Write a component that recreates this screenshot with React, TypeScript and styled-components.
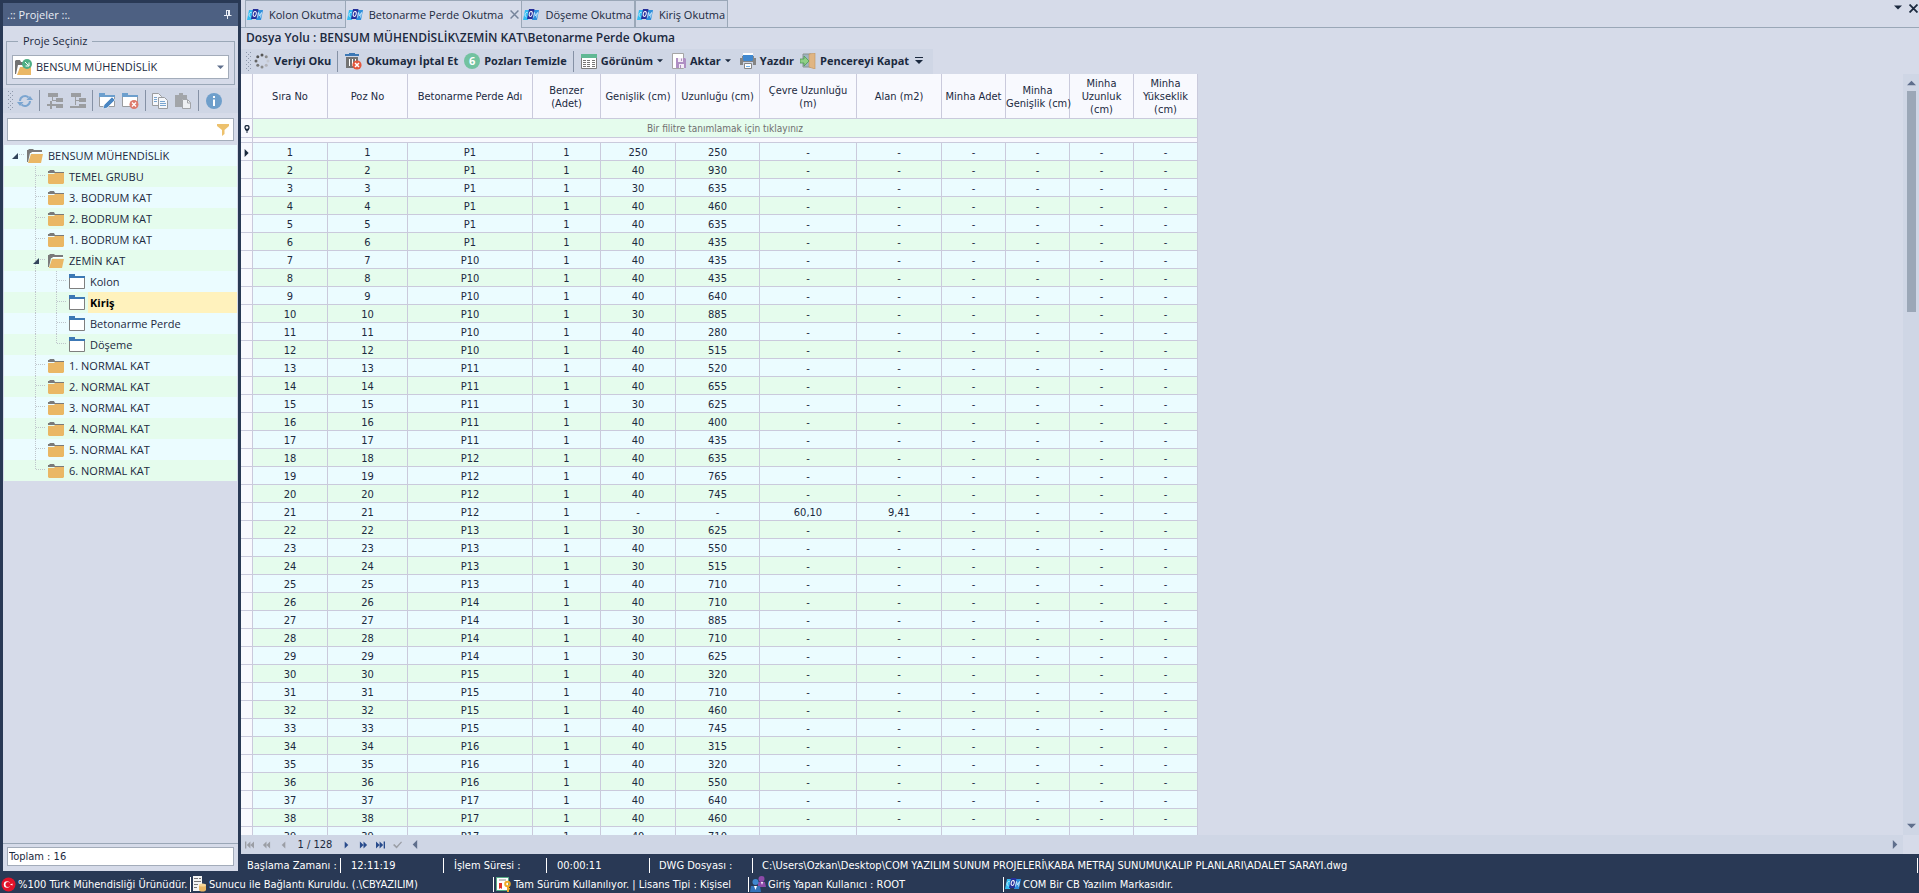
import React from 'react';
import styled, { createGlobalStyle, css } from 'styled-components';

const UI_FONT = '"Open Sans", "Noto Sans", sans-serif';
const GRID_FONT = '"DejaVu Sans Condensed", "Noto Sans", sans-serif';

const c = {
  dark: '#293955',
  title: '#4d6082',
  panel: '#d6dbe9',
  bar: '#cfd6e5',
  line: '#9aa7b7',
  grid: '#cacadc',
  head: '#f8f9fe',
  cyan: '#ebfcff',
  green: '#e5fced',
  text: '#1b293e',
};

const GlobalStyle = createGlobalStyle`
  * { box-sizing: border-box; }
  body { margin: 0; background: ${c.dark}; color: ${c.text}; font: 11px/16px ${UI_FONT}; }
  button, select, input { font: inherit; color: inherit; border: 0; padding: 0; margin: 0; background: none; outline: 0; }
  svg { display: block; flex: none; }
`;

const Page = styled.div`
  height: 100vh;
  display: flex;
  flex-direction: column;
  overflow: hidden;
`;
const Main = styled.div`
  flex: 1;
  min-height: 0;
  display: flex;
`;

/* ---------- left panel ---------- */
const Sidebar = styled.aside`
  width: 241px;
  flex: none;
  padding: 3px 3px 0;
  display: flex;
`;
const Panel = styled.div`
  flex: 1;
  min-width: 0;
  margin-bottom: -17px;
  background: ${c.panel};
  display: flex;
  flex-direction: column;
`;
const PanelTitle = styled.div`
  height: 23px;
  padding: 0 6px 0 4px;
  background: ${c.title};
  color: #e9edf5;
  display: flex;
  align-items: center;
  justify-content: space-between;
`;
const Group = styled.fieldset`
  margin: 7px 3px 3px;
  padding: 6px 5px 5px;
  border: 1px solid ${c.line};
  min-width: 0;
`;
const GroupLegend = styled.legend`
  margin-left: 6px;
  padding: 0 5px;
`;
const Combo = styled.div`
  height: 24px;
  display: flex;
  align-items: center;
  gap: 4px;
  padding: 0 4px 0 2px;
  background: #fff;
  border: 1px solid #a3acba;
`;
const ComboSelect = styled.select`
  appearance: none;
  flex: 1;
  min-width: 0;
`;
const IconBar = styled.div`
  height: 25px;
  padding-left: 4px;
  background: ${c.bar};
  display: flex;
  align-items: center;
`;
const IconButton = styled.button`
  width: 23px;
  height: 23px;
  display: grid;
  place-items: center;
`;
const BarSeparator = styled.span<{ $wide?: boolean }>`
  width: 1px;
  height: 21px;
  margin: 0 ${p => (p.$wide ? 4 : 3)}px 0 3px;
  background: #8591a5;
`;
const SearchBox = styled.div`
  height: 23px;
  margin: 5px 4px 4px;
  padding: 0 4px;
  border: 1px solid #a3acba;
  background: #fff;
  display: flex;
  align-items: center;
`;
const SearchInput = styled.input`
  flex: 1;
  min-width: 0;
`;
const Tree = styled.ul`
  list-style: none;
  margin: 0 1px;
  padding: 0;
  flex: 1;
`;
const TreeRow = styled.li<{ $alt: boolean }>`
  height: 21px;
  padding-left: 2px;
  display: flex;
  align-items: center;
  background: ${p => (p.$alt ? c.green : c.cyan)};
`;
const TreeLabel = styled.span<{ $selected?: boolean }>`
  flex: 1;
  height: 21px;
  margin-left: 3px;
  padding-left: 2px;
  line-height: 21px;
  ${p => p.$selected && css`background: #fff2bd; color: #000; font-weight: 700;`}
`;
const TotalBar = styled.div`
  border-top: 1px solid ${c.line};
  padding: 3px 4px 5px;
`;
const TotalInput = styled.input`
  width: 100%;
  height: 19px;
  padding: 0 1px;
  background: #fff;
  border: 1px solid #a3acba;
  display: block;
  font-family: ${GRID_FONT};
`;

/* ---------- work area ---------- */
const Work = styled.main`
  flex: 1;
  min-width: 0;
  background: ${c.panel};
  display: flex;
  flex-direction: column;
`;
const TabStrip = styled.div`
  height: 28px;
  display: flex;
`;
const TabEdge = styled.div<{ $grow?: boolean }>`
  width: 4px;
  ${p => p.$grow && css`flex: 1;`}
  border-bottom: 1px solid ${c.line};
  display: flex;
  justify-content: flex-end;
  align-items: flex-start;
  gap: 7px;
  padding: ${p => (p.$grow ? '4px 1px 0 0' : '0')};
`;
const Tab = styled.button<{ $active?: boolean }>`
  border: 1px solid ${c.line};
  border-left-width: ${p => (p.$active ? 0 : 1)}px;
  border-right-width: ${p => (p.$active ? 0 : 1)}px;
  border-bottom-color: ${p => (p.$active ? 'transparent' : c.line)};
  background: ${p => (p.$active ? c.panel : c.bar)};
  padding: 1px 2px 0 1px;
  display: flex;
  align-items: center;
  gap: 6px;
  white-space: nowrap;
`;
const TabClose = styled.span`
  margin-left: 1px;
`;
const PathLine = styled.div`
  height: 21px;
  padding-left: 5px;
  font-size: 12px;
  line-height: 20px;
  font-weight: 600;
  white-space: nowrap;
`;
const Toolbar = styled.div`
  align-self: flex-start;
  height: 25px;
  padding: 0 7px 1px 4px;
  background: ${c.bar};
  display: flex;
  align-items: center;
`;
const ToolButton = styled.button<{ $menu?: boolean }>`
  height: 23px;
  padding: 0 ${p => (p.$menu ? 6 : 3)}px 0 3px;
  display: flex;
  align-items: center;
  gap: 4px;
  font-weight: 700;
  white-space: nowrap;
`;
const Badge = styled.span`
  width: 16px;
  height: 16px;
  border-radius: 50%;
  background: #72c2a0;
  color: #fff;
  line-height: 16px;
  text-align: center;
`;
const GridArea = styled.div`
  flex: 1;
  min-height: 0;
  display: flex;
`;
const GridView = styled.div`
  flex: 1;
  min-width: 0;
  overflow: hidden;
`;
const Table = styled.table`
  width: 957px;
  table-layout: fixed;
  border-collapse: separate;
  border-spacing: 0;
  font: 11px/13px ${GRID_FONT};
`;
const HeadCell = styled.th`
  height: 45px;
  padding: 1px 0 0;
  background: ${c.head};
  border: solid ${c.grid};
  border-width: 0 1px 1px 0;
  font-weight: 400;
  white-space: nowrap;
`;
const Cell = styled.td`
  height: 18px;
  padding: 2px 0 0;
  border: solid ${c.grid};
  border-width: 0 1px 1px 0;
  text-align: center;
  line-height: 15px;
`;
const Marker = styled(Cell)`
  background: ${c.head};
  svg { margin: 0 auto; }
`;
const FilterCell = styled(Cell)`
  height: 19px;
  padding: 0;
  background: ${c.green};
  color: #707070;
  font-size: 10px;
`;
const GapCell = styled(Cell)`
  height: 5px;
  padding: 0;
  line-height: 0;
  background: ${c.head};
`;
const DataRow = styled.tr<{ $alt: boolean }>`
  background: ${p => (p.$alt ? c.green : c.cyan)};
`;
const VScroll = styled.div`
  width: 16px;
  background: ${c.bar};
  display: flex;
  flex-direction: column;
  align-items: center;
`;
const ScrollButton = styled.button`
  width: 16px;
  height: 17px;
  flex: none;
  display: grid;
  place-items: center;
`;
const VThumb = styled.div`
  width: 9px;
  height: 29%;
  background: #9ba7b7;
`;
const Spring = styled.div`
  flex: 1;
`;
const NavBar = styled.div`
  height: 19px;
  background: ${c.bar};
  font: 11px/19px ${GRID_FONT};
  display: flex;
  align-items: center;
`;
const NavButton = styled.button`
  width: 17px;
  height: 19px;
  display: grid;
  place-items: center;
`;
const NavText = styled.span`
  width: 46px;
  text-align: center;
`;
const Corner = styled.span`
  width: 16px;
  height: 19px;
  background: ${c.panel};
`;

/* ---------- status bars ---------- */
const StatusArea = styled.footer`
  color: #fff;
  font: 11px/16px ${GRID_FONT};
  white-space: nowrap;
`;
const StatusTop = styled.div`
  height: 21px;
  margin-left: 241px;
  padding: 1px 1px 0 6px;
  display: flex;
  align-items: center;
`;
const StatusBottom = styled.div`
  height: 18px;
  display: flex;
  align-items: center;
`;
const Slot = styled.div<{ $w?: number; $pad?: number }>`
  ${p => (p.$w ? css`width: ${p.$w}px;` : css`flex: 1;`)}
  padding-left: ${p => p.$pad ?? 0}px;
  border-right: ${p => (p.$w ? 1 : 0)}px solid #fff;
  height: 15px;
  line-height: 15px;
  display: flex;
  align-items: center;
  gap: 2px;
`;
const EndMark = styled.span`
  width: 1px;
  height: 15px;
  background: #fff;
`;

/* ---------- drawings ---------- */
const Grip = () => (
  <svg width="6" height="19">
    {[0, 1, 2, 3, 4].map(i => (
      <g key={i} fill="#8d98ab">
        <rect x="1" y={i * 4} width="1" height="1" />
        <rect x="5" y={i * 4} width="1" height="1" />
        <rect x="3" y={i * 4 + 2} width="1" height="1" />
      </g>
    ))}
  </svg>
);
const Arrow = ({ dir = 'down', size = 5, color = '#1b293e' }: { dir?: string; size?: number; color?: string }) => {
  const d: Record<string, string> = {
    down: 'M0 2h10L5 7z',
    up: 'M0 8h10L5 3z',
    left: 'M8 0v10L3 5z',
    right: 'M2 0v10l5-5z',
  };
  return <svg width={size} height={size} viewBox="0 0 10 10"><path d={d[dir]} fill={color} /></svg>;
};
const Cross = ({ size, color, w }: { size: number; color: string; w: number }) => (
  <svg width={size} height={size} viewBox="0 0 8 8"><path d="M.5.5l7 7M7.5.5l-7 7" stroke={color} strokeWidth={w} /></svg>
);
const PinIcon = () => (
  <svg width="8" height="9" viewBox="0 0 8 9" fill="none" stroke="#e9edf5"><path d="M2.5 0v5M2 .5h4M0 5.5h7.500M3.500 6v3" /><path d="M5 0v5" strokeWidth="2" /></svg>
);
const BrandIcon = () => (
  <svg width="16" height="12" viewBox="0 0 16 12" fill="none">
    <path d="M2 1h5L5 11H0z" fill="#35bdf2" />
    <path d="M11 1h5l-2 10H9z" fill="#2f8fdc" />
    <path d="M6 0h5.500L9.500 10H4z" fill="#26309b" />
    <path d="M4.500 3.500C2 3 1 7 3.500 8" stroke="#c9f2ff" />
    <ellipse cx="7.700" cy="5" rx="1.500" ry="2.500" stroke="#fff" transform="rotate(12 8 5)" />
    <path d="M10.500 8.500l1-5 1 3.500L14.500 3.500l-1 5" stroke="#d8f0ff" strokeWidth=".8" />
  </svg>
);
const OpenFolder = () => (
  <svg width="16" height="14" viewBox="0 0 16 14"><path d="M0 1h1l1-1h4l1 1h8v3H3L1 13H0z" fill="#7a7a7a" /><path d="M5 3h10v1H4z" fill="#fff" /><path d="M4 5h12l-2 9H1z" fill="#eab765" /></svg>
);
const ClosedFolder = () => (
  <svg width="16" height="14" viewBox="0 0 16 14"><path d="M0 1h1l1-1h4l1 2h9v1H0z" fill="#7a7a7a" /><path d="M0 4h6l1-1h9v10l-1 1H1l-1-1z" fill="#eab765" /></svg>
);
const WindowIcon = () => (
  <svg width="16" height="15" viewBox="0 0 16 15"><path d="M.5 2.500h15v12H.5z" fill="#fff" stroke="#7f7f7f" /><path d="M0 0h6v2h10v2H0z" fill="#3c78b5" /></svg>
);
const ComboFolder = () => (
  <svg width="17" height="16" viewBox="0 0 17 16"><path d="M0 2l1-1h4l1 2h6v3H3L1 15H0z" fill="#737373" /><path d="M5 8h11v8H2z" fill="#eab765" /><circle cx="12" cy="5" r="5" fill="#4fae85" /><path d="M10 3l3.500 3.500M14 3.500V7h-3.500" stroke="#fff" fill="none" /></svg>
);
const Funnel = () => (
  <svg width="12" height="12" viewBox="0 0 12 12"><path d="M0 0h12v2L7.500 6v4L5 12V6L0 2z" fill="#edc16d" /></svg>
);
const RefreshIcon = () => (
  <svg width="16" height="14" viewBox="0 0 16 14"><path d="M3 7a5 5 0 018.500-3.500M13 7a5 5 0 01-8.500 3.500" fill="none" stroke="#7ba5d0" strokeWidth="2" /><path d="M9.500 6H16l-3-4zM6.500 8H0l3 4z" fill="#7ba5d0" /></svg>
);
const NodesIcon = ({ plus }: { plus?: boolean }) => (
  <svg width="16" height="16" viewBox="0 0 16 16" fill="#9b9da0">
    <path d="M1 0h10v4H1zM9 5h7v4H9zM9 11h7v4H9z" />
    <path d="M5.500 4v4M5 7.500h4" stroke="#9b9da0" />
    {plus ? <path d="M0 11h3V8h2v3h4v2H5v3H3v-3H0z" /> : <path d="M0 13h9v2H0zM5 8h1v4H5z" />}
  </svg>
);
const EditWindow = () => (
  <svg width="17" height="16" viewBox="0 0 17 16"><path d="M.5 2.500h15v11H.5z" fill="#fff" stroke="#9a9c9f" /><path d="M0 0h6v2h10v2H0z" fill="#6d9fcd" /><path d="M4 16l1-4 8-8 3 3-8 8z" fill="#4a86c2" stroke="#fff" strokeWidth=".6" /></svg>
);
const DeleteWindow = () => (
  <svg width="17" height="16" viewBox="0 0 17 16"><path d="M.5 2.500h15v11H.5z" fill="#fff" stroke="#9a9c9f" /><path d="M0 0h6v2h10v2H0z" fill="#6d9fcd" /><circle cx="12" cy="11.500" r="4.500" fill="#dd7a6c" /><path d="M10 9.500l4 4M14 9.500l-4 4" stroke="#fff" strokeWidth="1.300" /></svg>
);
const CopyIcon = () => (
  <svg width="17" height="16" viewBox="0 0 17 16" fill="#f5f7fb" stroke="#9a9c9f"><path d="M.5.5h6l3 3v9h-9z" /><path d="M2 4.500h3M2 6.500h3M2 8.500h3" stroke="#7aa5cf" /><path d="M6.500 4.500h6l3 3v8h-9z" /><path d="M8 8.500h5M8 10.500h6M8 12.500h6" stroke="#7aa5cf" /></svg>
);
const PasteIcon = () => (
  <svg width="17" height="16" viewBox="0 0 17 16"><path d="M0 2h4V0h4v2h4v4H7v8H0z" fill="#a2a5a9" /><path d="M7.500 6.500h5l3 3v6h-8z" fill="#eef0f4" stroke="#a2a5a9" /><path d="M12.500 7v3h3" fill="none" stroke="#a2a5a9" /></svg>
);
const InfoIcon = () => (
  <svg width="16" height="16" viewBox="0 0 16 16"><circle cx="8" cy="8" r="8" fill="#6f9fcb" /><path d="M7 3h2v2H7zM7 6.500h2V13H7z" fill="#fff" /></svg>
);
const SpinnerIcon = () => (
  <svg width="16" height="16" viewBox="0 0 16 16">
    {['#555', '#8a8a8a', '#c4c7cf', '#b3b3b8', '#8a8a8a', '#777', '#666', '#555'].map((fill, i) => {
      const a = (i * Math.PI) / 4 - Math.PI / 2;
      return <circle key={i} cx={8 + 6 * Math.cos(a)} cy={8 + 6 * Math.sin(a)} r="1.500" fill={fill} />;
    })}
  </svg>
);
const TrashIcon = () => (
  <svg width="17" height="17" viewBox="0 0 17 17"><path d="M4 0h6v1h4v2H0V1h4z" fill="#3c78b5" /><path d="M1 4h12v11H1z" fill="#737373" /><path d="M4.500 6v7M7.500 6v7M10.500 6v3" stroke="#fff" /><circle cx="12" cy="12" r="4.600" fill="#e4573d" /><path d="M10 10l4 4M14 10l-4 4" stroke="#fff" strokeWidth="1.500" /></svg>
);
const ListIcon = () => (
  <svg width="16" height="15" viewBox="0 0 16 15"><path d="M.5.5h15v14H.5z" fill="#fff" stroke="#7d7d7d" /><path d="M0 0h16v4H0z" fill="#60b894" /><path d="M2 6.500h3M2 8.500h3M2 10.500h3M2 12.500h3M6 6.500h3M6 8.500h3M6 10.500h3M6 12.500h3M11 6.500h3M11 8.500h3M11 10.500h3M11 12.500h3" stroke="#777" /></svg>
);
const ExportIcon = () => (
  <svg width="14" height="16" viewBox="0 0 14 16"><path d="M.5.5h11v15H.5z" fill="#fff" stroke="#a5a5a5" /><path d="M4 5h9l1 1v9H4z" fill="#af8fc3" /><path d="M6 5h5v4H6zM7 11h5v4H7z" fill="#f3edf6" /><path d="M9 5.500h1V8H9zM8 12h1v3H8z" fill="#af8fc3" /></svg>
);
const PrinterIcon = () => (
  <svg width="16" height="16" viewBox="0 0 16 16"><path d="M0 5h2V3h12v2h2v7h-3V9H3v3H0z" fill="#858585" /><path d="M3 0h10v7H3z" fill="#fff" /><path d="M3 2h10v5l-1 1H4L3 7z" fill="#3f87cf" /><path d="M4.500 10.500h7v5h-7z" fill="#fff" stroke="#858585" /><path d="M6 13.500h4" stroke="#6fb2ef" /></svg>
);
const DoorIcon = () => (
  <svg width="16" height="16" viewBox="0 0 16 16"><path d="M3 1h8v13H3z" fill="#9db4c2" stroke="#8a948f" /><path d="M9 1l6-1v16l-6-2z" fill="#e0b583" stroke="#c1935f" strokeWidth=".6" /><path d="M0 6h4V3l5 5-5 5v-3H0z" fill="#8fcf86" stroke="#4f9a55" strokeWidth=".8" /></svg>
);
const OverflowIcon = () => (
  <svg width="8" height="8" viewBox="0 0 8 8" fill={c.text}><path d="M0 0h8v1H0zM0 3h8L4 7z" /></svg>
);
const FilterPin = () => (
  <svg width="6" height="8" viewBox="0 0 6 8"><circle cx="3" cy="2.500" r="2" fill="none" stroke={c.text} strokeWidth="1.300" /><path d="M1 4h4v1L3.500 6v2h-1V6L1 5z" fill={c.text} /></svg>
);
const NavGlyph = ({ kind, off }: { kind: string; off?: boolean }) => {
  const d: Record<string, string> = {
    first: 'M0 0h1.500v8H0zM6 0v8L2 4zM10 0v8L6 4z',
    fastBack: 'M5 0v8L1 4zM9 0v8L5 4z',
    back: 'M7 0v8L3 4z',
    next: 'M3 0v8l4-4z',
    fastNext: 'M1 0v8l4-4zM5 0v8l4-4z',
    last: 'M0 0v8l4-4zM4 0v8l4-4zM8.500 0H10v8H8.500z',
    check: 'M0 4l1.500-1L4 5.500 9 0l1 1-6 7z',
  };
  return <svg width="9" height="8" viewBox="0 0 10 8"><path d={d[kind]} fill={off ? '#9b9ea5' : '#284b8c'} /></svg>;
};
const FlagIcon = () => (
  <svg width="15" height="15" viewBox="0 0 15 15"><circle cx="7.500" cy="7.500" r="7" fill="#e3132a" /><circle cx="6" cy="7.500" r="3.200" fill="#fff" /><circle cx="7" cy="7.500" r="2.500" fill="#e3132a" /><path d="M9 7.500l2.500-1v2z" fill="#fff" /></svg>
);
const ServerIcon = () => (
  <svg width="15" height="16" viewBox="0 0 15 16"><path d="M1 0h9v15H1z" fill="#f4f4f4" /><path d="M2 2.500h4M7 2.500h2M2 5.500h7M2 8.500h4M2 11.500h3" stroke="#777" /><path d="M7 9v5c1 2 6 2 7 0V9z" fill="#eab765" /><ellipse cx="10.500" cy="9" rx="3.500" ry="1.500" fill="#f7d79a" /></svg>
);
const LicenseIcon = () => (
  <svg width="16" height="15" viewBox="0 0 16 15"><path d="M.5.5h12v13H.5z" fill="#fff" stroke="#55ab84" /><path d="M3 3h7" stroke="#888" /><path d="M3 6h3v6l-1.500-1L3 12z" fill="#e0332a" /><circle cx="11.500" cy="7" r="2.300" fill="none" stroke="#f0a826" strokeWidth="2" /><path d="M11 9h2v6h-2zM12 11h2v1.500h-2z" fill="#f0a826" /></svg>
);
const UsersIcon = () => (
  <svg width="16" height="16" viewBox="0 0 16 16"><circle cx="11.500" cy="3" r="3" fill="#8d4aa8" /><path d="M8 6h7l1 5H8z" fill="#8d4aa8" /><path d="M11 6h2l-1 3z" fill="#fff" /><circle cx="5.500" cy="6" r="3" fill="#3f87cf" /><path d="M1 10h9l1 6H0z" fill="#3473ba" /><path d="M4 10h3l-1.500 4z" fill="#fff" /></svg>
);

type GuideKind = 'none' | 'root' | 'open' | 'tee' | 'end' | 'pass';
const Guide = ({ kind }: { kind: GuideKind }) => {
  const dot = { stroke: '#bfc6cc', strokeDasharray: '1 1' };
  return (
    <svg width="21" height="21">
      {(kind === 'tee' || kind === 'pass' || kind === 'open') && <path d="M8.500 0v21" {...dot} />}
      {kind === 'end' && <path d="M8.500 0v10" {...dot} />}
      {(kind === 'tee' || kind === 'end') && <path d="M9 9.500h10" {...dot} />}
      {(kind === 'root' || kind === 'open') && (
        <>
          <path d="M13 9.500h6" {...dot} />
          <path d="M12 8v6H6z" fill="#33445c" />
        </>
      )}
    </svg>
  );
};

/* ---------- data ---------- */
type Node = { label: string; guides: GuideKind[]; icon: 'open' | 'closed' | 'win'; selected?: boolean };
const floor = (label: string, last = false): Node => ({ label, guides: ['none', last ? 'end' : 'tee'], icon: 'closed' });
const part = (label: string, last = false, selected = false): Node => ({
  label, guides: ['none', 'pass', last ? 'end' : 'tee'], icon: 'win', selected,
});
const nodes: Node[] = [
  { label: 'BENSUM MÜHENDİSLİK', guides: ['root'], icon: 'open' },
  floor('TEMEL GRUBU'),
  floor('3. BODRUM KAT'),
  floor('2. BODRUM KAT'),
  floor('1. BODRUM KAT'),
  { label: 'ZEMİN KAT', guides: ['none', 'open'], icon: 'open' },
  part('Kolon'),
  part('Kiriş', false, true),
  part('Betonarme Perde'),
  part('Döşeme', true),
  floor('1. NORMAL KAT'),
  floor('2. NORMAL KAT'),
  floor('3. NORMAL KAT'),
  floor('4. NORMAL KAT'),
  floor('5. NORMAL KAT'),
  floor('6. NORMAL KAT', true),
];
const nodeIcon = { open: <OpenFolder />, closed: <ClosedFolder />, win: <WindowIcon /> };

const columns: { lines: string[]; w: number }[] = [
  { lines: ['Sıra No'], w: 75 },
  { lines: ['Poz No'], w: 80 },
  { lines: ['Betonarme Perde Adı'], w: 125 },
  { lines: ['Benzer', '(Adet)'], w: 68 },
  { lines: ['Genişlik (cm)'], w: 75 },
  { lines: ['Uzunluğu (cm)'], w: 84 },
  { lines: ['Çevre Uzunluğu', '(m)'], w: 97 },
  { lines: ['Alan (m2)'], w: 85 },
  { lines: ['Minha Adet'], w: 64 },
  { lines: ['Minha', 'Genişlik (cm)'], w: 64 },
  { lines: ['Minha', 'Uzunluk', '(cm)'], w: 64 },
  { lines: ['Minha', 'Yükseklik', '(cm)'], w: 64 },
];

const groups: [string, string][] = [
  ['P1', '250/250 40/930 30/635 40/460 40/635 40/435'],
  ['P10', '40/435 40/435 40/640 30/885 40/280 40/515'],
  ['P11', '40/520 40/655 30/625 40/400 40/435'],
  ['P12', '40/635 40/765 40/745 -/-/60,10/9,41'],
  ['P13', '30/625 40/550 30/515 40/710'],
  ['P14', '40/710 30/885 40/710 30/625'],
  ['P15', '40/320 40/710 40/460 40/745'],
  ['P16', '40/315 40/320 40/550'],
  ['P17', '40/640 40/460 40/710'],
];
const rows = groups
  .flatMap(([name, list]) => list.split(' ').map(item => [name, ...item.split('/')]))
  .map(([name, width, length, around = '-', area = '-'], i) => [
    `${i + 1}`, `${i + 1}`, name, '1', width, length, around, area, '-', '-', '-', '-',
  ]);

const tabs = ['Kolon Okutma', 'Betonarme Perde Okutma', 'Döşeme Okutma', 'Kiriş Okutma'];

export default function App() {
  return (
    <Page>
      <GlobalStyle />
      <Main>
        <Sidebar>
          <Panel>
            <PanelTitle>.:: Projeler ::.<PinIcon /></PanelTitle>
            <Group>
              <GroupLegend>Proje Seçiniz</GroupLegend>
              <Combo>
                <ComboFolder />
                <ComboSelect aria-label="Proje Seçiniz"><option>BENSUM MÜHENDİSLİK</option></ComboSelect>
                <Arrow size={7} color="#5f6f8c" />
              </Combo>
            </Group>
            <IconBar>
              <Grip />
              <IconButton aria-label="Yenile"><RefreshIcon /></IconButton>
              <BarSeparator />
              <IconButton aria-label="Ekle"><NodesIcon plus /></IconButton>
              <IconButton aria-label="Çıkar"><NodesIcon /></IconButton>
              <BarSeparator />
              <IconButton aria-label="Düzenle"><EditWindow /></IconButton>
              <IconButton aria-label="Sil"><DeleteWindow /></IconButton>
              <BarSeparator />
              <IconButton aria-label="Kopyala"><CopyIcon /></IconButton>
              <IconButton aria-label="Yapıştır"><PasteIcon /></IconButton>
              <BarSeparator />
              <IconButton aria-label="Bilgi"><InfoIcon /></IconButton>
            </IconBar>
            <SearchBox>
              <SearchInput aria-label="Ara" />
              <Funnel />
            </SearchBox>
            <Tree>
              {nodes.map((n, i) => (
                <TreeRow key={n.label} $alt={i % 2 === 1}>
                  {n.guides.map((g, k) => <Guide key={k} kind={g} />)}
                  {nodeIcon[n.icon]}
                  <TreeLabel $selected={n.selected}>{n.label}</TreeLabel>
                </TreeRow>
              ))}
            </Tree>
            <TotalBar><TotalInput aria-label="Toplam" readOnly value="Toplam : 16" /></TotalBar>
          </Panel>
        </Sidebar>
        <Work>
          <TabStrip>
            <TabEdge />
            {tabs.map((t, i) => (
              <Tab key={t} $active={i === 1}>
                <BrandIcon />{t}
                {i === 1 && <TabClose><Cross size={9} color="#76849b" w={1.3} /></TabClose>}
              </Tab>
            ))}
            <TabEdge $grow>
              <button aria-label="Pencereler"><Arrow size={8} /></button>
              <button aria-label="Kapat"><Cross size={9} color={c.text} w={1.6} /></button>
            </TabEdge>
          </TabStrip>
          <PathLine>Dosya Yolu : BENSUM MÜHENDİSLİK\ZEMİN KAT\Betonarme Perde Okuma</PathLine>
          <Toolbar>
            <Grip />
            <ToolButton><SpinnerIcon />Veriyi Oku</ToolButton>
            <BarSeparator $wide />
            <ToolButton><TrashIcon />Okumayı İptal Et</ToolButton>
            <ToolButton><Badge>6</Badge>Pozları Temizle</ToolButton>
            <BarSeparator $wide />
            <ToolButton $menu><ListIcon />Görünüm<Arrow size={6} /></ToolButton>
            <ToolButton $menu><ExportIcon />Aktar<Arrow size={6} /></ToolButton>
            <ToolButton><PrinterIcon />Yazdır</ToolButton>
            <ToolButton><DoorIcon />Pencereyi Kapat</ToolButton>
            <ToolButton aria-label="Diğer"><OverflowIcon /></ToolButton>
          </Toolbar>
          <GridArea>
            <GridView>
              <Table>
                <colgroup>
                  <col style={{ width: 12 }} />
                  {columns.map((col, i) => <col key={i} style={{ width: col.w }} />)}
                </colgroup>
                <thead>
                  <tr>
                    <HeadCell />
                    {columns.map((col, i) => (
                      <HeadCell key={i} scope="col">
                        {col.lines.map((l, k) => <React.Fragment key={k}>{k > 0 && <br />}{l}</React.Fragment>)}
                      </HeadCell>
                    ))}
                  </tr>
                </thead>
                <tbody>
                  <tr>
                    <Marker><FilterPin /></Marker>
                    <FilterCell colSpan={12}>Bir filitre tanımlamak için tıklayınız</FilterCell>
                  </tr>
                  <tr><GapCell /><GapCell colSpan={12} /></tr>
                  {rows.map((r, i) => (
                    <DataRow key={i} $alt={i % 2 === 1}>
                      <Marker>{i === 0 && <Arrow dir="right" size={8} />}</Marker>
                      {r.map((v, k) => <Cell key={k}>{v}</Cell>)}
                    </DataRow>
                  ))}
                </tbody>
              </Table>
            </GridView>
            <VScroll>
              <ScrollButton aria-label="Yukarı"><Arrow dir="up" size={9} color="#5f6f8c" /></ScrollButton>
              <VThumb />
              <Spring />
              <ScrollButton aria-label="Aşağı"><Arrow size={9} color="#5f6f8c" /></ScrollButton>
            </VScroll>
          </GridArea>
          <NavBar>
            <NavButton aria-label="İlk"><NavGlyph kind="first" off /></NavButton>
            <NavButton aria-label="Önceki sayfa"><NavGlyph kind="fastBack" off /></NavButton>
            <NavButton aria-label="Önceki"><NavGlyph kind="back" off /></NavButton>
            <NavText>1 / 128</NavText>
            <NavButton aria-label="Sonraki"><NavGlyph kind="next" /></NavButton>
            <NavButton aria-label="Sonraki sayfa"><NavGlyph kind="fastNext" /></NavButton>
            <NavButton aria-label="Son"><NavGlyph kind="last" /></NavButton>
            <NavButton aria-label="Onayla"><NavGlyph kind="check" off /></NavButton>
            <ScrollButton aria-label="Sola"><Arrow dir="left" size={9} color="#5f6f8c" /></ScrollButton>
            <Spring />
            <ScrollButton aria-label="Sağa"><Arrow dir="right" size={9} color="#5f6f8c" /></ScrollButton>
            <Corner />
          </NavBar>
        </Work>
      </Main>
      <StatusArea>
        <StatusTop>
          <Slot $w={94}>Başlama Zamanı :</Slot>
          <Slot $w={103} $pad={10}>12:11:19</Slot>
          <Slot $w={103} $pad={10}>İşlem Süresi :</Slot>
          <Slot $w={103} $pad={10}>00:00:11</Slot>
          <Slot $w={103} $pad={9}>DWG Dosyası :</Slot>
          <Slot $pad={9}>C:\Users\Ozkan\Desktop\COM YAZILIM SUNUM PROJELERİ\KABA METRAJ SUNUMU\KALIP PLANLARI\ADALET SARAYI.dwg</Slot>
          <EndMark />
        </StatusTop>
        <StatusBottom>
          <Slot $w={191} $pad={1}><FlagIcon />%100 Türk Mühendisliği Ürünüdür.</Slot>
          <Slot $w={303} $pad={1}><ServerIcon />Sunucu ile Bağlantı Kuruldu. (.\CBYAZILIM)</Slot>
          <Slot $w={255} $pad={2}><LicenseIcon />Tam Sürüm Kullanılıyor. | Lisans Tipi : Kişisel</Slot>
          <Slot $w={255} $pad={1}><UsersIcon />Giriş Yapan Kullanıcı : ROOT</Slot>
          <Slot $pad={1}><BrandIcon />COM Bir CB Yazılım Markasıdır.</Slot>
        </StatusBottom>
      </StatusArea>
    </Page>
  );
}
